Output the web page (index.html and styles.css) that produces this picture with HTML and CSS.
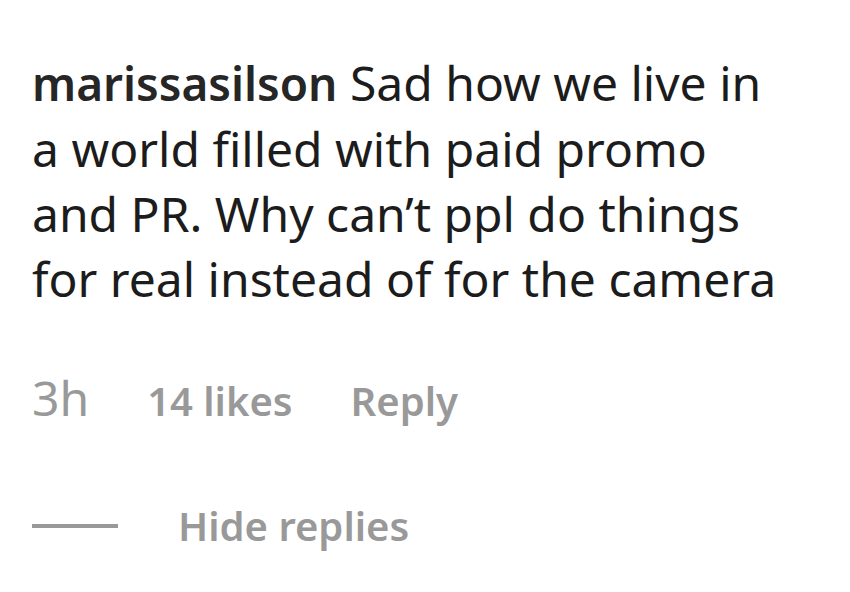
FILE: index.html
```html
<!DOCTYPE html>
<html lang="en">
<head>
    <meta charset="UTF-8">
    <meta name="viewport" content="width=device-width, initial-scale=1.0">
    <title>Comments</title>
    <link rel="stylesheet" href="styles.css">
</head>
<body>
    <article class="comment">
        <!-- Comment text -->
        <p class="comment-text">
            <a class="username" href="#">marissasilson</a>
            Sad how we live in<br>
            a world filled with paid promo<br>
            and PR. Why can’t ppl do things<br>
            for real instead of for the camera
        </p>

        <!-- Time, likes and reply -->
        <div class="comment-meta">
            <time class="time">3h</time>
            <button class="meta-btn" type="button">14 likes</button>
            <button class="meta-btn" type="button">Reply</button>
        </div>

        <!-- Replies toggle -->
        <button class="replies-btn" type="button">
            <span class="line"></span>
            Hide replies
        </button>
    </article>
</body>
</html>
```
FILE: styles.css
```css
body {
    margin: 0;
    background-color: #fff;
    font-family: "Noto Sans", "Open Sans", sans-serif;
    color: #1c1c1c;
}

.comment {
    padding: 50px 32px;
}

.comment-text {
    margin: 0;
    font-size: 48px;
    line-height: 65px;
}

.username {
    color: #262626;
    font-size: 46px;
    font-weight: 600;
    text-decoration: none;
}

.comment-meta {
    display: flex;
    align-items: baseline;
    gap: 58px;
    margin-top: 54px;
    color: #999;
}

.time {
    font-size: 48px;
    line-height: 65px;
}

.meta-btn,
.replies-btn {
    padding: 0;
    border: none;
    background: none;
    color: #999;
    font-family: inherit;
    font-size: 40px;
    font-weight: 600;
    line-height: 65px;
    cursor: pointer;
}

.replies-btn {
    display: flex;
    align-items: center;
    gap: 60px;
    margin-top: 60px;
}

.line {
    width: 86px;
    height: 4px;
    background-color: #999;
}
```
